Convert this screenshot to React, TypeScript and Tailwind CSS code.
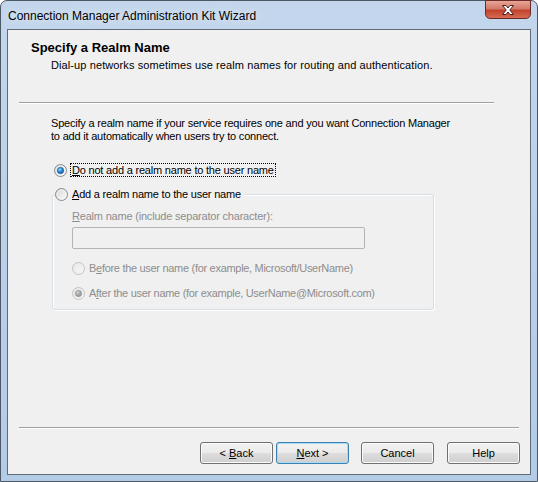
import React from "react";

type RadioProps = { checked?: boolean; disabled?: boolean; id: string };

function Radio({ checked, disabled, id }: RadioProps) {
  const border = disabled ? "#c2c2c2" : "#8a8a8a";
  return (
    <svg width="13" height="13" viewBox="0 0 13 13" className="shrink-0">
      <defs>
        <linearGradient id={`bg-${id}`} x1="0" y1="0" x2="1" y2="1">
          <stop offset="0" stopColor={disabled ? "#e6e6e6" : "#d4d4d4"} />
          <stop offset="1" stopColor={disabled ? "#fafafa" : "#ffffff"} />
        </linearGradient>
        <radialGradient id={`dot-${id}`} cx="0.4" cy="0.35" r="0.7">
          <stop offset="0" stopColor={disabled ? "#d8d8d8" : "#9fdcff"} />
          <stop offset="0.5" stopColor={disabled ? "#a8a8a8" : "#2a8ad4"} />
          <stop offset="1" stopColor={disabled ? "#8a8a8a" : "#0d4f91"} />
        </radialGradient>
      </defs>
      <circle cx="6.5" cy="6.5" r="6" fill={`url(#bg-${id})`} stroke={border} strokeWidth="1" />
      <circle cx="6.5" cy="6.5" r="4.3" fill="none" stroke={disabled ? "#ececec" : "#f4f4f4"} strokeWidth="0.8" />
      {checked && (
        <circle cx="6.5" cy="6.5" r="3.2" fill={`url(#dot-${id})`} stroke={disabled ? "#9a9a9a" : "#1b5e99"} strokeWidth="0.6" />
      )}
    </svg>
  );
}

function Button({ children, isDefault }: { children: React.ReactNode; isDefault?: boolean }) {
  return (
    <div
      className={`w-[73px] h-[22px] rounded-[3px] border flex items-center justify-center text-[11px] text-black ${
        isDefault ? "border-[#3c7fb1] shadow-[inset_0_0_0_1px_#a7dcf7]" : "border-[#707070] shadow-[inset_0_0_0_1px_#fbfbfb]"
      } bg-[linear-gradient(to_bottom,#f2f2f2_0%,#ebebeb_48%,#dddddd_52%,#cfcfcf_100%)]`}
    >
      {children}
    </div>
  );
}

export default function App() {
  return (
    <div className="w-[538px] h-[482px] overflow-hidden [font-family:'Liberation_Sans',Arial,sans-serif]">
      <div className="w-[538px] h-[482px] rounded-t-[7px] border border-[#4d5866] bg-[linear-gradient(to_bottom,#c3d6ec_0%,#bcd1ea_40%,#b4cbe6_100%)] flex flex-col">
        {/* Title bar */}
        <div className="h-[28px] shrink-0 flex items-start justify-between">
          <div className="pl-[7px] pt-[6px] text-[12px] text-black [text-shadow:0_0_8px_rgba(255,255,255,0.9)]">
            Connection Manager Administration Kit Wizard
          </div>
          <div className="mr-[6px] w-[46px] h-[19px] -mt-px rounded-b-[5px] border border-[#6b2a2a] bg-[linear-gradient(to_bottom,#e8a596_0%,#d47a6a_45%,#c2432d_55%,#d76b52_100%)] flex items-center justify-center">
            <svg width="16" height="12" viewBox="0 0 16 12">
              <path
                d="M2.5 1.5 L6 1.5 L8 4 L10 1.5 L13.5 1.5 L9.8 6 L13.5 10.5 L10 10.5 L8 8 L6 10.5 L2.5 10.5 L6.2 6 Z"
                fill="#ffffff"
                stroke="#4a2020"
                strokeWidth="1"
                strokeLinejoin="round"
              />
            </svg>
          </div>
        </div>

        {/* Client area */}
        <div className="mx-[6px] mb-[6px] flex-1 border border-[#5f6b78] bg-[#f0f0f0] flex flex-col text-[11px] text-black tracking-[-0.2px]">
          {/* Header */}
          <div className="h-[72px] shrink-0 flex flex-col tracking-normal">
            <div className="pl-[23px] pt-[10px] text-[13px] font-bold leading-[16px]">Specify a Realm Name</div>
            <div className="pl-[43px] pt-[3px] leading-[13px] tracking-[0.1px]">
              Dial-up networks sometimes use realm names for routing and authentication.
            </div>
          </div>
          <div className="ml-[11px] w-[475px] h-[2px] border-t border-[#a0a0a0] border-b border-b-white" />

          {/* Body */}
          <div className="pl-[43px] pt-[13px] leading-[13px]">
            <div>Specify a realm name if your service requires one and you want Connection Manager</div>
            <div>to add it automatically when users try to connect.</div>
          </div>

          <div className="pl-[46px] pt-[20px] flex items-center h-[14px] box-content">
            <Radio id="r1" checked />
            <div className="ml-[3px] border border-dotted border-black px-px leading-[12px]">
              <span className="underline">D</span>o not add a realm name to the user name
            </div>
          </div>

          {/* Group box */}
          <div className="relative ml-[44px] mt-[17px] w-[382px] h-[116px] rounded-[3px] border border-[#d5dfe5] shadow-[inset_1px_1px_0_#ffffff,1px_1px_0_#ffffff]">
            <div className="absolute left-[1px] -top-[8px] flex items-center bg-[#f0f0f0] pr-[4px] pl-[1px]">
              <Radio id="r2" />
              <div className="ml-[4px] leading-[14px]">
                <span className="underline">A</span>dd a realm name to the user name
              </div>
            </div>
            <div className="pl-[19px] pt-[15px] text-[#8d8d8d] leading-[13px]">
              <span className="underline">R</span>ealm name (include separator character):
            </div>
            <div className="ml-[19px] mt-[4px] w-[293px] h-[22px] border border-[#b4b4b4] rounded-[2px] bg-[#f0f0f0]" />
            <div className="ml-[19px] mt-[13px] flex items-center text-[#8d8d8d] h-[13px]">
              <Radio id="r3" disabled />
              <div className="ml-[4px] tracking-[-0.3px]">
                B<span className="underline">e</span>fore the user name (for example, Microsoft/UserName)
              </div>
            </div>
            <div className="ml-[19px] mt-[12px] flex items-center text-[#8d8d8d] h-[13px]">
              <Radio id="r4" disabled checked />
              <div className="ml-[4px] tracking-[-0.3px]">
                A<span className="underline">f</span>ter the user name (for example, UserName@Microsoft.com)
              </div>
            </div>
          </div>

          <div className="flex-1" />
          <div className="ml-[11px] w-[500px] h-[2px] border-t border-[#a0a0a0] border-b border-b-white" />
          <div className="h-[45px] shrink-0 flex items-start pt-[13px] pl-[192px] tracking-normal">
            <Button>
              &lt; <span className="underline ml-[3px]">B</span>ack
            </Button>
            <div className="ml-[3px]">
              <Button isDefault>
                <span className="underline">N</span>ext &gt;
              </Button>
            </div>
            <div className="ml-[12px]">
              <Button>Cancel</Button>
            </div>
            <div className="ml-[13px]">
              <Button>Help</Button>
            </div>
          </div>
        </div>
      </div>
    </div>
  );
}
